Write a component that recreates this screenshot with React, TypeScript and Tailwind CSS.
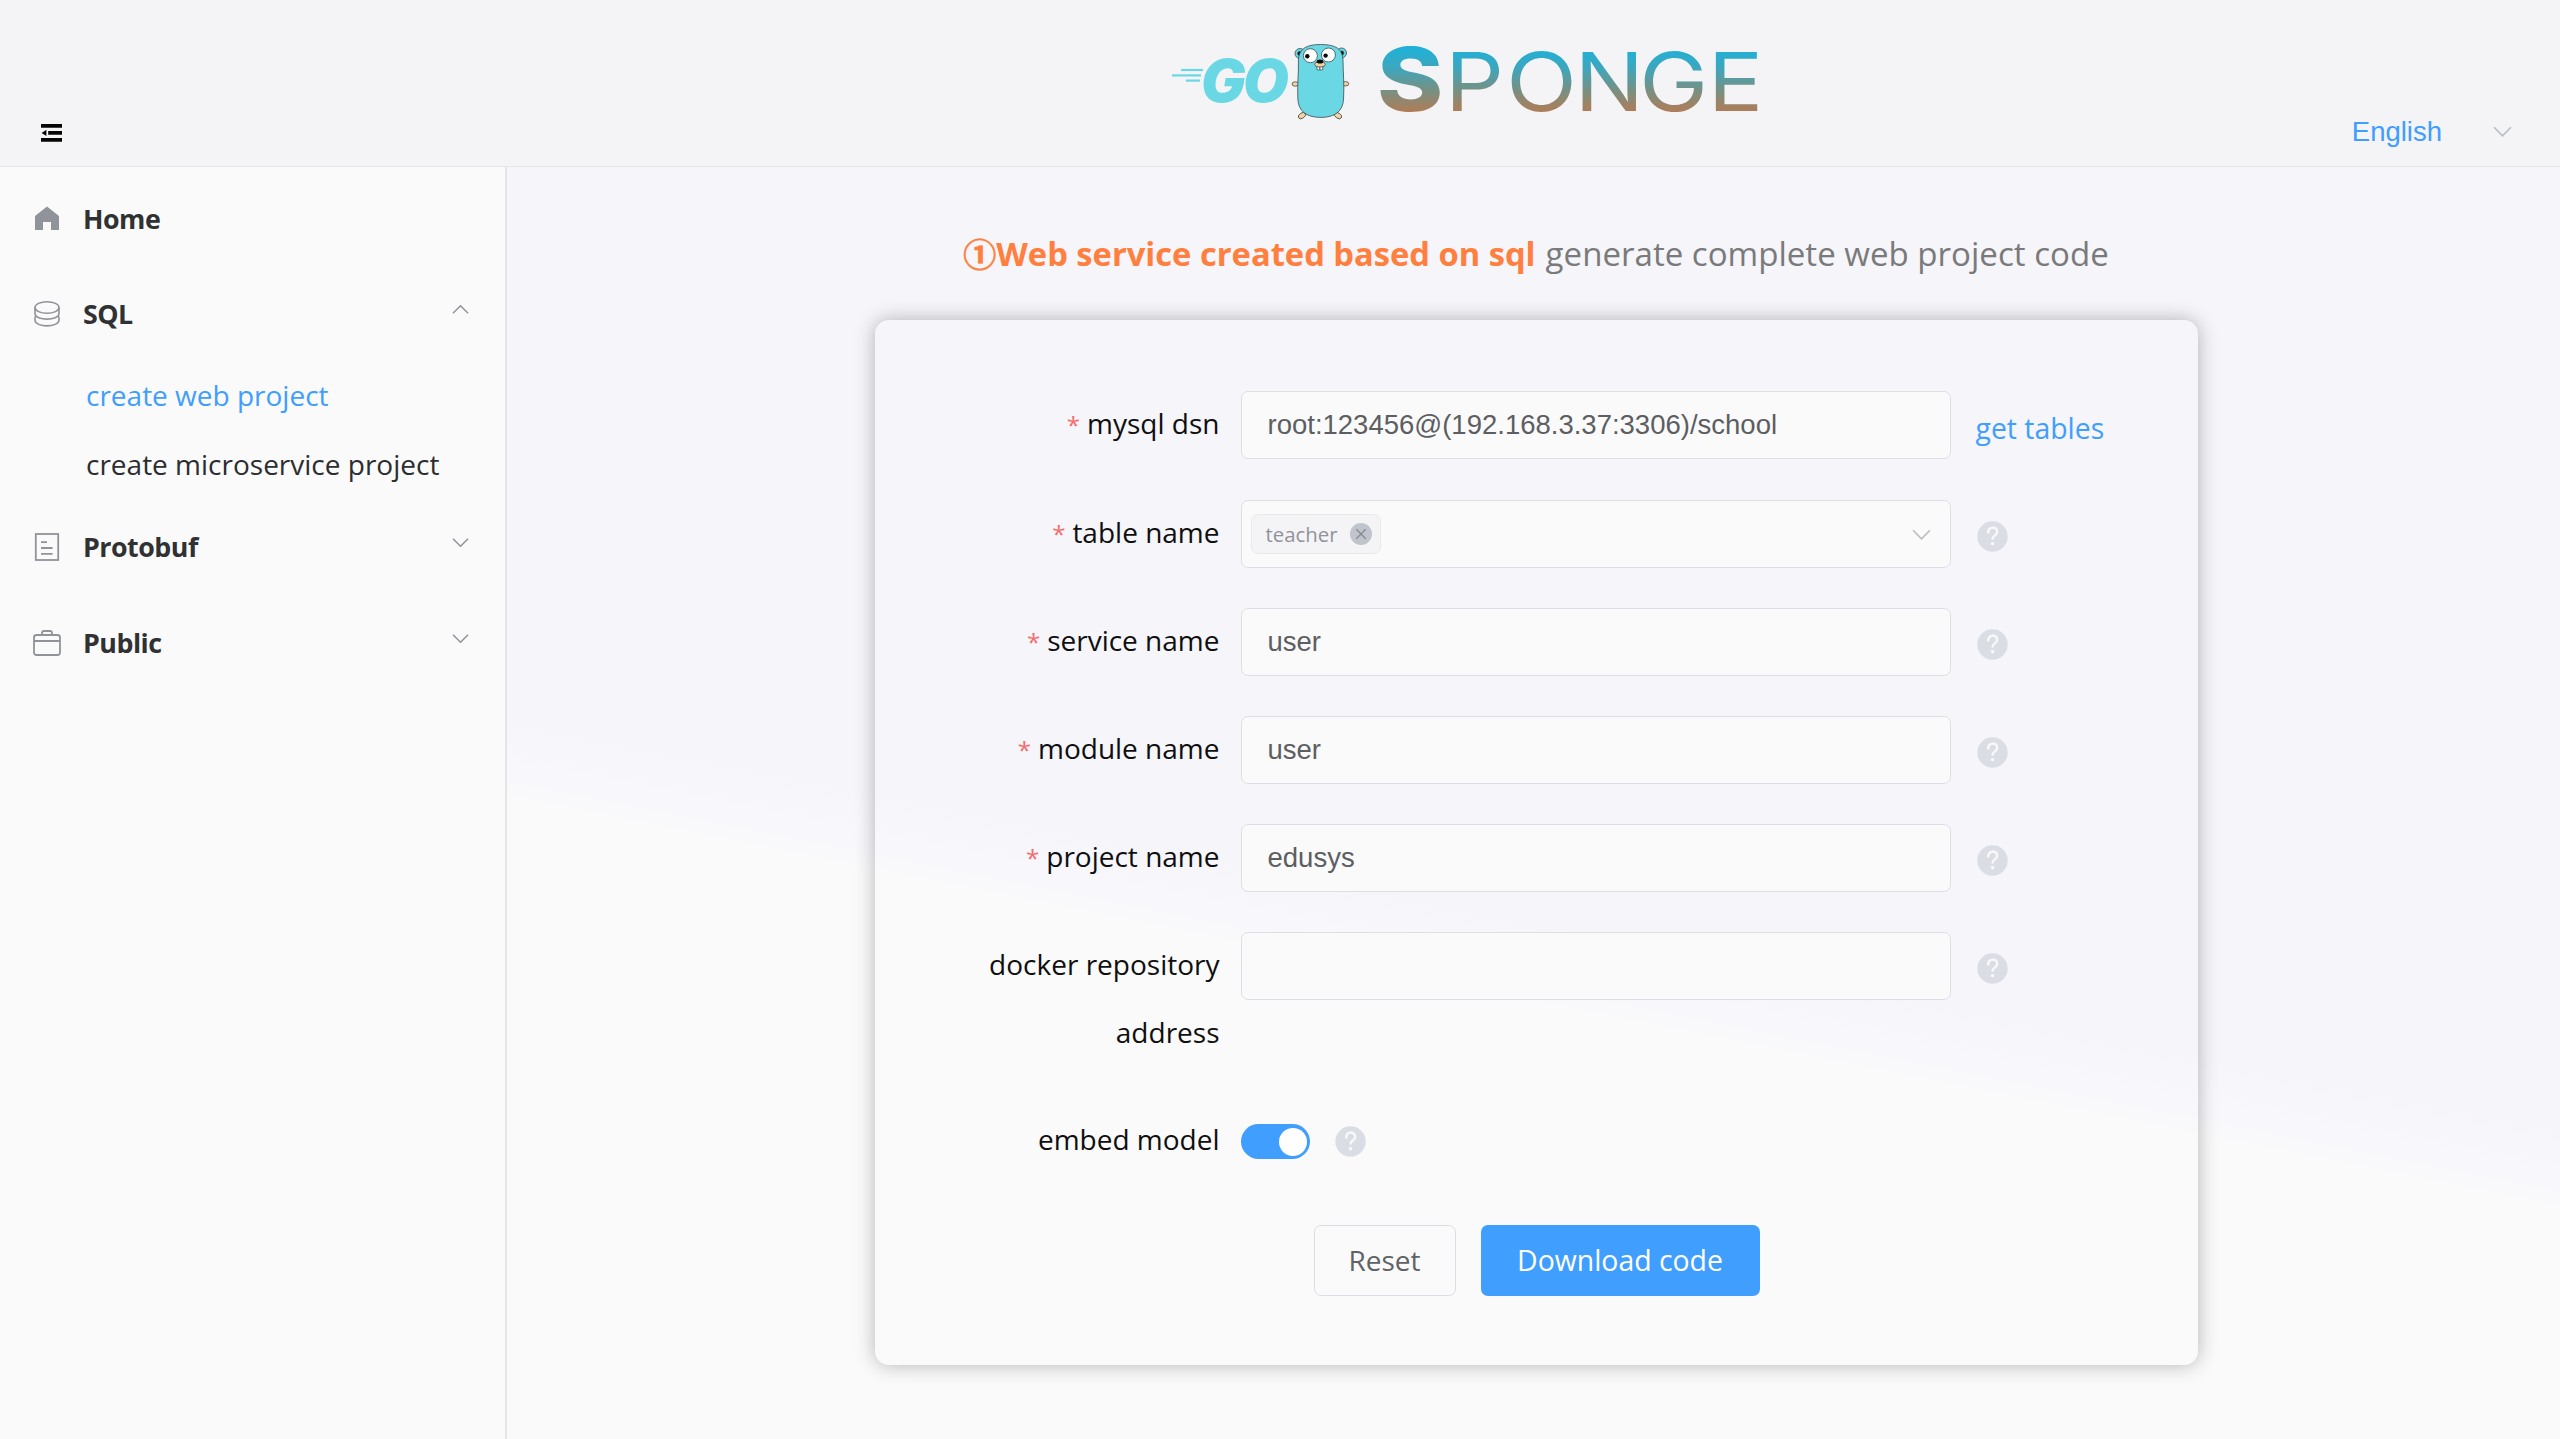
import React from "react";

function Chevron({ up = false, size = 18, className = "" }: { up?: boolean; size?: number; className?: string }) {
  return (
    <svg width={size} height={size} viewBox="0 0 18 18" fill="none" stroke="currentColor" strokeWidth="1.6" className={className}>
      <path d={up ? "M1 13 L9 5 L17 13" : "M1 5 L9 13 L17 5"} />
    </svg>
  );
}

function Help({ className = "" }: { className?: string }) {
  return (
    <svg width="31" height="31" viewBox="0 0 31 31" className={className}>
      <circle cx="15.5" cy="15.5" r="15.2" fill="#dadde4" />
      <path d="M11.2 11.6 C11.2 4.6 20.6 5.2 20.2 11.2 C19.9 14.6 15.6 14.4 15.6 17.6" fill="none" stroke="#f8f8fb" strokeWidth="2.5" strokeLinecap="round" />
      <circle cx="15.6" cy="22.6" r="1.8" fill="#f8f8fb" />
    </svg>
  );
}

function Logo() {
  return (
    <svg width="600" height="145" viewBox="1165 10 600 145" className="block">
      <defs>
        <linearGradient id="rust" gradientUnits="userSpaceOnUse" x1="0" y1="50" x2="0" y2="111">
          <stop offset="0" stopColor="#22b0d6" />
          <stop offset="0.3" stopColor="#3ea6bd" />
          <stop offset="0.65" stopColor="#759184" />
          <stop offset="1" stopColor="#ae7d58" />
        </linearGradient>
      </defs>
      <g stroke="#6ad7e5" strokeWidth="2.2">
        <path d="M1181 70 H1203" />
        <path d="M1172 75.4 H1201" />
        <path d="M1186 80.6 H1200" />
      </g>
      <text x="1201 1243" y="101.5" fontSize="59" fontWeight="900" fontStyle="italic" fill="#6ad7e5" className="font-[Inter]">GO</text>
      <g stroke="#3b4a4d" strokeWidth="0.8">
        <circle cx="1300" cy="53.5" r="5" fill="#6ad7e5" />
        <circle cx="1341.5" cy="53" r="5" fill="#6ad7e5" />
        <circle cx="1299.6" cy="53.5" r="2" fill="#111" />
        <circle cx="1341.8" cy="53" r="2" fill="#111" />
        <ellipse cx="1295.4" cy="84" rx="3.4" ry="2.2" fill="#f6d2a2" />
        <ellipse cx="1345.4" cy="83.8" rx="3.4" ry="2.2" fill="#f6d2a2" />
        <ellipse cx="1302" cy="115.6" rx="4" ry="2.6" fill="#f6d2a2" transform="rotate(-35 1302 115.6)" />
        <ellipse cx="1338" cy="115.6" rx="4" ry="2.6" fill="#f6d2a2" transform="rotate(35 1338 115.6)" />
        <path d="M1298.4 60 C1299 49 1306 44.5 1320.5 44.5 C1336 44.5 1342.4 49 1343 60 C1343 72 1344.4 84 1343.6 98 C1343.4 111 1335 117.4 1321 117.4 C1306 117.4 1298 111 1297.8 98 C1297.2 84 1298.8 72 1298.4 60 Z" fill="#6ad7e5" />
        <circle cx="1310.4" cy="55.7" r="7" fill="#fff" />
        <circle cx="1328.4" cy="55" r="7" fill="#fff" />
        <rect x="1317" y="65" width="2.9" height="5" rx="1" fill="#fff" />
        <rect x="1319.9" y="65" width="2.9" height="5" rx="1" fill="#fff" />
        <ellipse cx="1320" cy="64.4" rx="5.4" ry="2.6" fill="#f6d2a2" />
      </g>
      <g fill="#0a0a0a">
        <circle cx="1307.3" cy="56.2" r="2.2" />
        <circle cx="1325.6" cy="55.6" r="2.2" />
        <ellipse cx="1320" cy="61.5" rx="3.3" ry="2" />
      </g>
      <text transform="scale(1.14 1)" x="1207.9 1267.5 1321.2 1381.2 1438 1498" y="111.5" fontSize="81" fontWeight="400" fill="url(#rust)" className="font-[Inter]"><tspan fontSize="88" fontWeight="800">S</tspan>PONGE</text>
    </svg>
  );
}

const HomeIcon = (
  <svg width="28" height="28" viewBox="0 0 28 28"><path d="M14 1.5 L26 11 V25 H18 V17 H10 V25 H2 V11 Z" fill="#909399" /></svg>
);
const SqlIcon = (
  <svg width="28" height="28" viewBox="0 0 28 28" fill="none" stroke="#909399" strokeWidth="1.6">
    <ellipse cx="14" cy="7.5" rx="12" ry="5.8" />
    <path d="M2 7.5 V13.5 C2 21 26 21 26 13.5 V7.5" />
    <path d="M3 16 C1.6 17 2 17.6 2 20 C2 27.8 26 27.8 26 20 C26 17.6 26.4 17 25 16" />
  </svg>
);
const DocIcon = (
  <svg width="28" height="28" viewBox="0 0 28 28" fill="none" stroke="#909399" strokeWidth="1.8">
    <rect x="2.8" y="1" width="22.4" height="26" />
    <path d="M8 9.2 H14 M8 15 H19.6 M8 20.8 H19.6" />
  </svg>
);
const CaseIcon = (
  <svg width="28" height="28" viewBox="0 0 28 28" fill="none" stroke="#909399" strokeWidth="1.8">
    <rect x="1" y="6" width="26" height="20" rx="2.5" />
    <path d="M1 12 H27 M9 6 V4 Q9 2 11 2 H17 Q19 2 19 4 V6" />
  </svg>
);

function MenuItem({ icon, label, arrow, className }: { icon: React.ReactNode; label: string; arrow?: "up" | "down"; className: string }) {
  return (
    <div className={`flex items-center pl-[33px] pr-[36px] ${className}`}>
      {icon}
      <span className="ml-[22px] pt-[1px] text-[26.8px] font-bold tracking-[-0.5px] text-[#303133]">{label}</span>
      {arrow && <Chevron up={arrow === "up"} size={17} className="ml-auto mb-[9px] text-[#909399]" />}
    </div>
  );
}

function Row({ label, required = true, className = "", children }: { label: string; required?: boolean; className?: string; children: React.ReactNode }) {
  return (
    <div className={`flex items-start ${className}`}>
      <div className="-mt-[2px] mr-[21px] w-[345px] shrink-0 pl-[100px] text-right leading-[68px] text-[#0f0f10]">
        {required && <span className="mr-[7px] text-[24px] text-[#f56c6c]">*</span>}
        {label}
      </div>
      {children}
    </div>
  );
}

function Input({ value }: { value: string }) {
  return (
    <div className="flex h-[68px] w-[710px] shrink-0 items-center rounded-[7px] border border-[#dcdfe6] bg-[#fafafa] pb-px pl-[26px] font-['Liberation_Sans',sans-serif] text-[27.5px] text-[#5c5e62]">
      {value}
    </div>
  );
}

export default function App() {
  return (
    <div className="flex h-[1439px] w-[2560px] flex-col overflow-hidden bg-[#fafafa] font-['Open_Sans','Noto_Sans_CJK_SC',sans-serif] text-[28px]">
      <header className="flex h-[167px] shrink-0 justify-between border-b border-[#e6e6e8] bg-[#f4f4f6]">
        <div className="w-[1165px] pl-[41px] pt-[124px]">
          <svg width="21" height="18" viewBox="0 0 21 18">
            <path d="M0 0 H21 V3.7 H0 Z M7.2 7.1 H21 V10.8 H7.2 Z M0 14.1 H21 V17.8 H0 Z M5.4 5.8 V12 L0.6 8.9 Z" fill="#050505" />
          </svg>
        </div>
        <div className="pt-[10px]">
          <Logo />
        </div>
        <div className="flex flex-1 items-start justify-end pr-[48px] pt-[112px] font-['Liberation_Sans',sans-serif] text-[27.5px] leading-[40px] text-[#409eff]">
          English
          <Chevron size={19} className="ml-[51px] mt-[10px] text-[#b9bdc5]" />
        </div>
      </header>

      <div className="flex min-h-0 flex-1">
        <aside className="w-[507px] shrink-0 border-r-2 border-[#e5e5e8] bg-[#fafafa] pt-1">
          <MenuItem icon={HomeIcon} label="Home" className="h-[95px]" />
          <MenuItem icon={SqlIcon} label="SQL" arrow="up" className="h-[95px]" />
          <div className="flex h-[69px] items-center pb-[2px] pl-[86px] text-[#409eff]">create web project</div>
          <div className="flex h-[69px] items-center pb-[2px] pl-[86px] text-[#2c2d30]">create microservice project</div>
          <MenuItem icon={DocIcon} label="Protobuf" arrow="down" className="h-[96px]" />
          <MenuItem icon={CaseIcon} label="Public" arrow="down" className="h-[96px]" />
        </aside>

        <main className="flex flex-1 flex-col items-center bg-[linear-gradient(191.3deg,#f5f5fa_0%,#f5f5fa_57%,#f7f7fc_60%,#fafafb_62%,#fafafa_63%)] pl-[5px] pt-[64px]">
          <h1 className="flex h-[46px] items-center whitespace-pre text-[33.1px] text-[#7a7a7a]">
            <span className="font-['Noto_Sans_CJK_SC',sans-serif] text-[33px] font-bold text-[#ff7f3f] [-webkit-text-stroke:0.7px_#ff7f3f]">①</span>
            <span className="text-[32.7px] font-bold text-[#ff7f3f]">Web service created based on sql</span>
            <span className="ml-[10px]">generate complete web project code</span>
          </h1>

          <section className="mt-[43px] flex h-[1045px] w-[1323px] flex-col rounded-[14px] pt-[71px] shadow-[0_0_20px_rgba(0,0,0,0.28)]">
            <Row label="mysql dsn" className="mb-[41px] h-[68px]">
              <Input value="root:123456@(192.168.3.37:3306)/school" />
              <a className="ml-[25px] mt-[3px] text-[28.4px] leading-[68px] text-[#409eff]">get tables</a>
            </Row>
            <Row label="table name" className="mb-[40px] h-[68px]">
              <div className="flex h-[68px] w-[710px] shrink-0 items-center rounded-[7px] border border-[#dcdfe6] bg-[#fafafa] pl-[9px] pr-[19px]">
                <div className="flex h-[40px] w-[130px] items-center justify-between rounded-[7px] border border-[#e9e9eb] bg-[#f4f4f6] pl-[14px] pr-[8px] text-[20.4px] text-[#909399]">
                  teacher
                  <svg width="22" height="22" viewBox="0 0 22 22">
                    <circle cx="11" cy="11" r="11" fill="#c0c4cc" />
                    <path d="M6.3 6.3 L15.7 15.7 M15.7 6.3 L6.3 15.7" stroke="#85888f" strokeWidth="1.3" />
                  </svg>
                </div>
                <Chevron size={19} className="ml-auto text-[#b9bdc5]" />
              </div>
              <Help className="ml-[26px] mt-[21px]" />
            </Row>
            <Row label="service name" className="mb-[40px] h-[68px]">
              <Input value="user" />
              <Help className="ml-[26px] mt-[21px]" />
            </Row>
            <Row label="module name" className="mb-[40px] h-[68px]">
              <Input value="user" />
              <Help className="ml-[26px] mt-[21px]" />
            </Row>
            <Row label="project name" className="mb-[40px] h-[68px]">
              <Input value="edusys" />
              <Help className="ml-[26px] mt-[21px]" />
            </Row>
            <Row label="docker repository address" required={false} className="mb-[39px] h-[136px]">
              <Input value="" />
              <Help className="ml-[26px] mt-[21px]" />
            </Row>
            <Row label="embed model" required={false} className="h-[68px]">
              <div className="mt-[17px] flex h-[35px] w-[69px] items-center justify-end rounded-full bg-[#409eff] pr-[3px]">
                <div className="size-[28px] rounded-full bg-white" />
              </div>
              <Help className="ml-[25px] mt-[19px]" />
            </Row>
            <div className="mt-[50px] flex gap-[25px] pl-[439px]">
              <button className="h-[71px] w-[142px] rounded-[7px] border border-[#dcdfe6] bg-[#fafafa] pb-[2px] text-[#606266]">Reset</button>
              <button className="h-[71px] w-[279px] rounded-[7px] bg-[#409eff] pb-px text-[28.4px] text-white">Download code</button>
            </div>
          </section>
        </main>
      </div>
    </div>
  );
}
